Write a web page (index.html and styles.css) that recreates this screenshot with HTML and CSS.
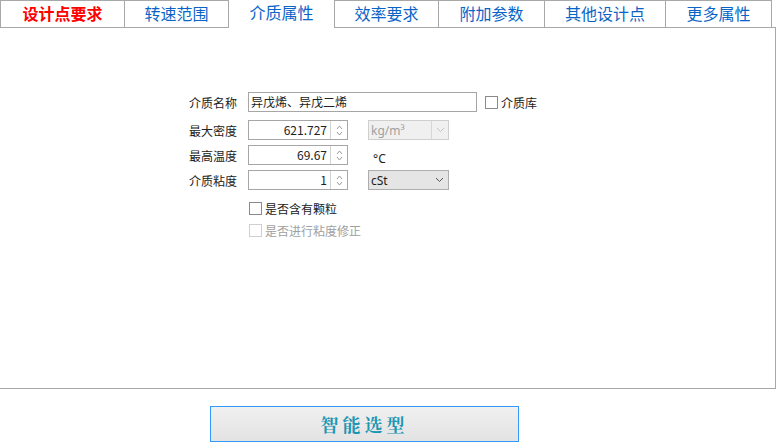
FILE: index.html
```html
<!DOCTYPE html>
<html lang="zh">
<head>
  <meta charset="UTF-8">
  <title>介质属性</title>
  <link rel="stylesheet" href="styles.css">
</head>
<body>
  <div class="tabs">
    <div class="tab tab-red" style="width: 125px">设计点要求</div>
    <div class="tab" style="width: 104px">转速范围</div>
    <div class="tab active" style="width: 106px">介质属性</div>
    <div class="tab" style="width: 104px">效率要求</div>
    <div class="tab" style="width: 106px">附加参数</div>
    <div class="tab" style="width: 121px">其他设计点</div>
    <div class="tab" style="width: 106px">更多属性</div>
  </div>

  <div class="panel">
    <div class="form">
      <div class="row row-first">
        <span class="label">介质名称</span>
        <div class="textbox">异戊烯、异戊二烯</div>
        <span class="check"><span class="box"></span>介质库</span>
      </div>

      <div class="row">
        <span class="label">最大密度</span>
        <div class="spin">
          <span class="num">621.727</span>
          <span class="arrows">
            <svg width="7" height="14" viewBox="0 0 7 14"><path d="M1 6 L3.5 3 L6 6 M1 9 L3.5 12 L6 9" fill="none" stroke="#9a9a9a" stroke-width="1"/></svg>
          </span>
        </div>
        <div class="select disabled">
          <span>kg/m³</span>
          <span class="drop"><svg width="9" height="6" viewBox="0 0 9 6"><path d="M1 1 L4.5 4.5 L8 1" fill="none" stroke="#c4c4c4"/></svg></span>
        </div>
      </div>

      <div class="row">
        <span class="label">最高温度</span>
        <div class="spin">
          <span class="num">69.67</span>
          <span class="arrows">
            <svg width="7" height="14" viewBox="0 0 7 14"><path d="M1 6 L3.5 3 L6 6 M1 9 L3.5 12 L6 9" fill="none" stroke="#9a9a9a" stroke-width="1"/></svg>
          </span>
        </div>
        <span class="unit">°C</span>
      </div>

      <div class="row">
        <span class="label">介质粘度</span>
        <div class="spin">
          <span class="num">1</span>
          <span class="arrows">
            <svg width="7" height="14" viewBox="0 0 7 14"><path d="M1 6 L3.5 3 L6 6 M1 9 L3.5 12 L6 9" fill="none" stroke="#9a9a9a" stroke-width="1"/></svg>
          </span>
        </div>
        <div class="select">
          <span>cSt</span>
          <span class="drop plain"><svg width="9" height="6" viewBox="0 0 9 6"><path d="M1 1 L4.5 4.5 L8 1" fill="none" stroke="#555"/></svg></span>
        </div>
      </div>

      <div class="opts">
        <span class="check"><span class="box"></span>是否含有颗粒</span>
        <span class="check off"><span class="box"></span>是否进行粘度修正</span>
      </div>
    </div>
  </div>

  <div class="footer">
    <button class="go">智能选型</button>
  </div>
</body>
</html>
```

FILE: styles.css
```css
* {
  box-sizing: border-box;
}

body {
  margin: 0;
  background: #fff;
  font-family: "Noto Sans CJK SC", "Noto Sans", sans-serif;
  font-size: 12px;
  color: #222;
}

.tabs {
  display: flex;
  height: 28px;
}

.tab {
  height: 28px;
  border: 1px solid #a8a8a8;
  border-left: none;
  color: #0a64c8;
  font-size: 16px;
  line-height: 25px;
  text-align: center;
}

.tab:first-child {
  border-left: 1px solid #a8a8a8;
}

.tab-red {
  color: #f00;
  font-weight: bold;
}

.tab.active {
  border-top: none;
  border-bottom: none;
  background: #fff;
}

.panel {
  width: 776px;
  height: 362px;
  margin-top: -1px;
  border: 1px solid #a8a8a8;
  border-left: none;
  border-top: none;
  padding: 65px 0 0 189px;
  background: linear-gradient(#a8a8a8, #a8a8a8) 335px 0 / 441px 1px no-repeat;
}

.panel::before {
  content: "";
}

.row {
  display: flex;
  align-items: center;
  height: 20px;
  margin-bottom: 5px;
}

.row-first {
  margin-bottom: 8px;
}

.label {
  width: 59px;
  flex: none;
}

.textbox {
  width: 229px;
  height: 20px;
  border: 1px solid #a6a6a6;
  padding: 0 2px;
  line-height: 17px;
}

.spin {
  display: flex;
  width: 100px;
  height: 20px;
  border: 1px solid #a6a6a6;
}

.num {
  flex: 1;
  text-align: right;
  padding-right: 3px;
  line-height: 17px;
}

.arrows {
  width: 17px;
  border-left: 1px solid #d2d2d2;
  display: flex;
  align-items: center;
  justify-content: center;
}

.arrows svg {
  display: block;
}

.select {
  display: flex;
  align-items: center;
  width: 81px;
  height: 20px;
  margin-left: 20px;
  border: 1px solid #adadad;
  background: #e5e5e5;
  padding-left: 2px;
  font-family: "Noto Sans", sans-serif;
  font-size: 12px;
}

.select span:first-child {
  flex: 1;
}

.select.disabled {
  background: #f0f0f0;
  border-color: #cfcfcf;
  color: #a0a0a0;
}

.drop {
  width: 17px;
  height: 18px;
  display: flex;
  align-items: center;
  justify-content: center;
  border-left: 1px solid #d6d6d6;
}

.drop.plain {
  border-left: none;
}

.unit {
  margin-left: 25px;
  margin-top: 6px;
  font-family: "Noto Sans", sans-serif;
}

.check {
  display: flex;
  align-items: center;
  margin-left: 8px;
}

.box {
  width: 13px;
  height: 13px;
  border: 1px solid #8a8a8a;
  background: #fff;
  margin-right: 3px;
}

.opts {
  display: flex;
  flex-direction: column;
  gap: 5px;
  padding-top: 5px;
  margin-left: 52px;
}

.opts .check {
  height: 17px;
}

.check.off {
  color: #a0a0a0;
}

.check.off .box {
  border-color: #cfcfcf;
}

.footer {
  padding: 17px 0 0 210px;
}

.go {
  width: 309px;
  height: 36px;
  border: 1px solid #3399ff;
  background: linear-gradient(#f0f0f0, #e3e3e3);
  color: #1b97b3;
  font-family: "Noto Serif CJK SC", "Noto Sans CJK SC", serif;
  font-size: 18px;
  font-weight: bold;
  letter-spacing: 4px;
  padding: 0;
}
```
